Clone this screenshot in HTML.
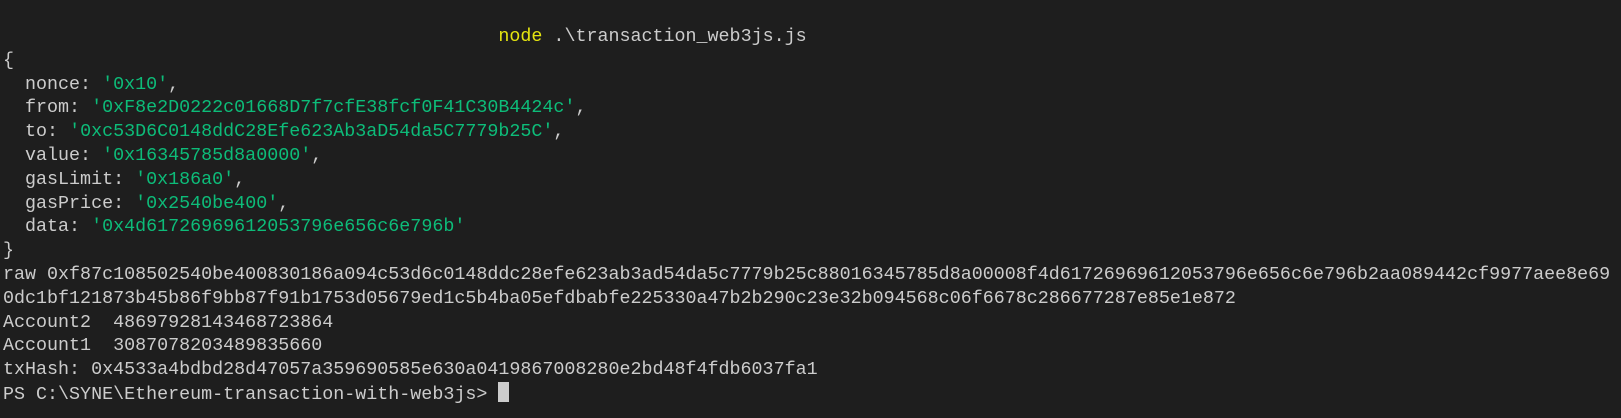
<!DOCTYPE html>
<html><head><style>
html,body{margin:0;background:#1e1e1e;width:1621px;height:418px;overflow:hidden}
pre{margin:0;position:absolute;left:3px;top:25px;font-family:"Liberation Mono",monospace;font-size:18.35px;line-height:23.8px;color:#cccccc;white-space:pre}
.s{color:#0dbc79}.y{color:#e5e510}
.c{display:inline-block;width:11px;height:20px;background:#cccccc;vertical-align:-3px}
</style></head><body>
<pre>                                             <span class="y">node</span> .\transaction_web3js.js
{
  nonce: <span class="s">'0x10'</span>,
  from: <span class="s">'0xF8e2D0222c01668D7f7cfE38fcf0F41C30B4424c'</span>,
  to: <span class="s">'0xc53D6C0148ddC28Efe623Ab3aD54da5C7779b25C'</span>,
  value: <span class="s">'0x16345785d8a0000'</span>,
  gasLimit: <span class="s">'0x186a0'</span>,
  gasPrice: <span class="s">'0x2540be400'</span>,
  data: <span class="s">'0x4d61726969612053796e656c6e796b'</span>
}
raw 0xf87c108502540be400830186a094c53d6c0148ddc28efe623ab3ad54da5c7779b25c88016345785d8a00008f4d61726969612053796e656c6e796b2aa089442cf9977aee8e69
0dc1bf121873b45b86f9bb87f91b1753d05679ed1c5b4ba05efdbabfe225330a47b2b290c23e32b094568c06f6678c286677287e85e1e872
Account2  48697928143468723864
Account1  3087078203489835660
txHash: 0x4533a4bdbd28d47057a359690585e630a0419867008280e2bd48f4fdb6037fa1
PS C:\SYNE\Ethereum-transaction-with-web3js&gt; <span class="c"></span></pre>
</body></html>
